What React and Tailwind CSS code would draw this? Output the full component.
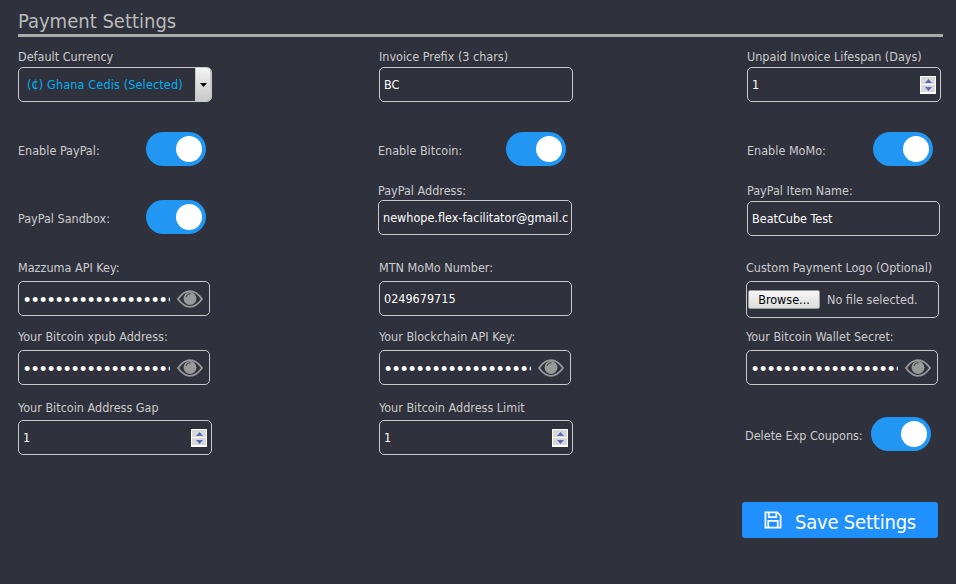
import React from "react";

const labelClass = "block h-4 text-[12.500px] leading-[18px] text-[#cccccc] whitespace-nowrap";
const boxClass = "flex items-center h-[35px] border border-[#c8c8c8] rounded-[5px] bg-transparent";
const secret = "••••••••••••••••••••••••••••";

const Toggle = () => (
  <div className="flex items-center justify-end w-[60px] h-[34px] rounded-full bg-[#2196f3] pr-1">
    <div className="w-[26px] h-[26px] rounded-full bg-white"></div>
  </div>
);

const Eye = () => (
  <svg className="ml-auto mr-[6px]" width="26" height="18" viewBox="0 0 26 18">
    <path d="M1 9 C5 3.500 9 1.200 13 1.200 C17 1.200 21 3.500 25 9 C21 14.500 17 16.800 13 16.800 C9 16.800 5 14.500 1 9 Z" fill="none" stroke="#999999" strokeWidth="1.800" />
    <circle cx="13" cy="8.500" r="6.500" fill="#999999" />
    <path d="M9 7 C9.500 5 11 3.800 13.500 3.800" fill="none" stroke="#2f313d" strokeWidth="1" />
  </svg>
);

const Spinner = () => (
  <div className="ml-auto mr-1 flex flex-col justify-center gap-px w-4 h-[18px] bg-white px-px">
    <div className="flex items-center justify-center h-[7px] bg-[#d8d8d8]">
      <svg width="7" height="4" viewBox="0 0 7 4"><path d="M3.500 0 L7 4 L0 4 Z" fill="#5a6ab8" /></svg>
    </div>
    <div className="flex items-center justify-center h-[7px] bg-[#d8d8d8]">
      <svg width="7" height="4" viewBox="0 0 7 4"><path d="M0 0 L7 0 L3.500 4 Z" fill="#5a6ab8" /></svg>
    </div>
  </div>
);

const TextBox = ({ value, width }) => (
  <div className={`${boxClass} ${width} overflow-hidden pr-[3px]`}>
    <span className="pl-1 pt-0.5 w-full overflow-hidden whitespace-nowrap text-[12.500px] text-white">{value}</span>
  </div>
);

const NumberBox = ({ width }) => (
  <div className={`${boxClass} ${width}`}>
    <span className="pl-1 pt-0.5 text-[12.500px] text-white">1</span>
    <Spinner />
  </div>
);

const SecretBox = ({ width }) => (
  <div className={`${boxClass} ${width}`}>
    <span className="ml-[5px] pt-0.5 w-[146px] overflow-hidden whitespace-nowrap font-['Liberation_Sans',sans-serif] text-[18px] leading-[18px] tracking-[1.700px] text-white">{secret}</span>
    <Eye />
  </div>
);

const Label = ({ children, className = "" }) => (
  <label className={`${labelClass} ${className}`}>{children}</label>
);

const App = () => {
  return (
    <div className="h-[584px] overflow-hidden bg-[#2f313d] pl-[18px] pr-[13px] font-['DejaVu_Sans',sans-serif] [font-stretch:condensed]">
      <h1 className="h-[37px] pt-2 border-b-[3px] border-[#aaaaaa] text-[20px] leading-[27px] text-[#bbbbbb]">Payment Settings</h1>

      <div className="grid grid-cols-[361px_368px_1fr] mt-[11px]">
        <div>
          <Label className="mb-[3px]">Default Currency</Label>
          <div className={`${boxClass} w-[194px] overflow-hidden`}>
            <span className="pl-2 pt-0.5 text-[12.500px] tracking-[0.150px] text-[#00b0f0]">(₵) Ghana Cedis (Selected)</span>
            <div className="ml-auto flex items-center justify-center w-4 h-full border-x border-[#c8c8c8] bg-gradient-to-b from-[#f4f4f4] to-[#c8c8c8]">
              <svg width="7" height="4" viewBox="0 0 7 4"><path d="M0 0 L7 0 L3.500 4 Z" fill="#000000" /></svg>
            </div>
          </div>
        </div>
        <div>
          <Label className="mb-[3px]">Invoice Prefix (3 chars)</Label>
          <TextBox value="BC" width="w-[194px]" />
        </div>
        <div>
          <Label className="mb-[3px]">Unpaid Invoice Lifespan (Days)</Label>
          <NumberBox width="w-[194px]" />
        </div>
      </div>

      <div className="grid grid-cols-[361px_368px_1fr] mt-[30px] items-center">
        <div className="flex items-center">
          <Label className="w-[128px] pt-px">Enable PayPal:</Label>
          <Toggle />
        </div>
        <div className="flex items-center -ml-px">
          <Label className="w-[128px] pt-px">Enable Bitcoin:</Label>
          <Toggle />
        </div>
        <div className="flex items-center">
          <Label className="w-[126px] pt-px">Enable MoMo:</Label>
          <Toggle />
        </div>
      </div>

      <div className="grid grid-cols-[361px_368px_1fr] mt-4 items-end">
        <div className="flex items-center mb-px">
          <Label className="w-[128px] pt-px">PayPal Sandbox:</Label>
          <Toggle />
        </div>
        <div className="-ml-px">
          <Label className="mb-0.5">PayPal Address:</Label>
          <TextBox value="newhope.flex-facilitator@gmail.com" width="w-[194px]" />
        </div>
        <div className="-mb-px">
          <Label className="mb-[3px]">PayPal Item Name:</Label>
          <TextBox value="BeatCube Test" width="w-[193px]" />
        </div>
      </div>

      <div className="grid grid-cols-[361px_368px_1fr] mt-6">
        <div>
          <Label className="mb-1.5">Mazzuma API Key:</Label>
          <SecretBox width="w-[192px]" />
        </div>
        <div>
          <Label className="mb-1.5">MTN MoMo Number:</Label>
          <TextBox value="0249679715" width="w-[193px]" />
        </div>
        <div className="-ml-px">
          <Label className="mb-1.5">Custom Payment Logo (Optional)</Label>
          <div className={`${boxClass} w-[193px] !h-[37px] pl-px`}>
            <button className="w-[72px] h-[19px] border border-[#9a9a9a] rounded-[2px] bg-gradient-to-b from-[#f6f6f6] to-[#dcdcdc] text-[12.500px] leading-[16px] text-black">Browse...</button>
            <span className="ml-[7px] pt-px text-[12.500px] text-[#cccccc]">No file selected.</span>
          </div>
        </div>
      </div>

      <div className="grid grid-cols-[361px_368px_1fr] mt-2.5">
        <div>
          <Label className="mb-1.5">Your Bitcoin xpub Address:</Label>
          <SecretBox width="w-[192px]" />
        </div>
        <div>
          <Label className="mb-1.5">Your Blockchain API Key:</Label>
          <SecretBox width="w-[192px]" />
        </div>
        <div className="-ml-px">
          <Label className="mb-1.5">Your Bitcoin Wallet Secret:</Label>
          <SecretBox width="w-[192px]" />
        </div>
      </div>

      <div className="grid grid-cols-[361px_368px_1fr] mt-3.5 items-start">
        <div>
          <Label className="mb-[5px]">Your Bitcoin Address Gap</Label>
          <NumberBox width="w-[194px]" />
        </div>
        <div>
          <Label className="mb-[5px]">Your Bitcoin Address Limit</Label>
          <NumberBox width="w-[194px]" />
        </div>
        <div className="flex items-center -ml-0.5 mt-[18px]">
          <Label className="w-[126px] pt-px">Delete Exp Coupons:</Label>
          <Toggle />
        </div>
      </div>

      <div className="flex justify-end mt-[47px] pr-[5px]">
        <button className="flex items-center justify-center gap-[13px] w-[196px] h-9 rounded-[3px] bg-[#2090ff] text-[20px] tracking-[-0.200px] text-white">
          <svg width="18" height="18" viewBox="0 0 19 19" fill="none" stroke="#ffffff" strokeWidth="1.800">
            <path d="M1.500 1.500 H14 L17.500 5 V17.500 H1.500 Z" />
            <path d="M5 1.500 V6.500 H13 V1.500" />
            <path d="M4.500 17.500 V10.500 H14.500 V17.500" />
          </svg>
          <span className="pt-1">Save Settings</span>
        </button>
      </div>
    </div>
  );
};

export default App;
